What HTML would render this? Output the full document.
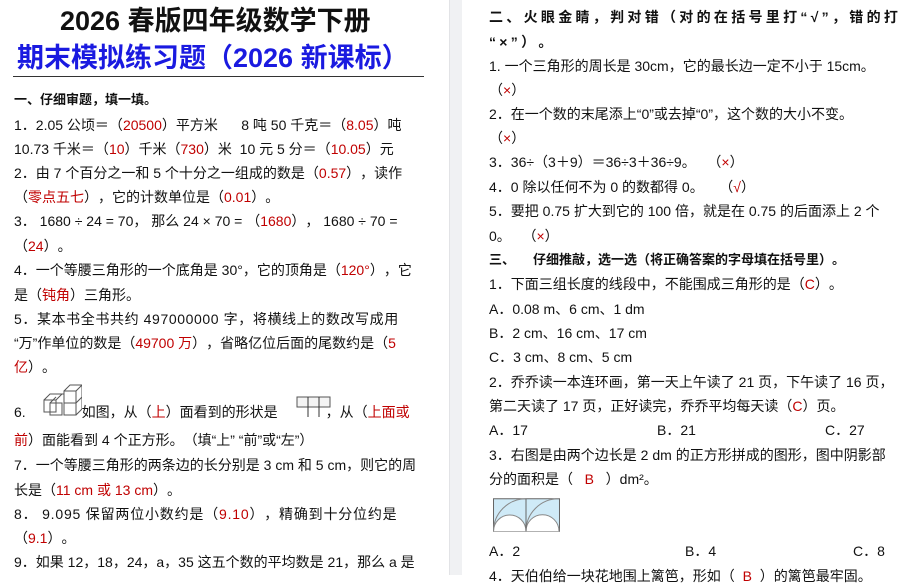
<!DOCTYPE html>
<html><head><meta charset="utf-8"><style>
body{margin:0;width:922px;height:575px;overflow:hidden;background:#fff;font-family:"Liberation Sans","Noto Sans CJK SC",sans-serif;font-size:14px;color:#111;position:relative;text-spacing-trim:space-all}
.l{position:absolute;white-space:nowrap;line-height:20px;text-spacing-trim:space-all}
.r{color:#c00000}
.b{font-weight:bold}
.sep{position:absolute;left:449px;top:0;width:12px;height:575px;background:#f0f1f3;border-left:1px solid #e2e3e6}
</style></head><body>
<div class="sep"></div>
<div class="l b" style="left:60px;top:5px;font-size:27px;line-height:32px;color:#111">2026 春版四年级数学下册</div>
<div class="l b" style="left:17px;top:41px;font-size:27px;line-height:34px;color:#1a1ae0">期末模拟练习题（2026 新课标）</div>
<div style="position:absolute;left:13px;top:76px;width:411px;height:1px;background:#333"></div>

<div class="l b" style="left:14px;top:90px;font-size:13px">一、仔细审题，填一填。</div>
<div class="l" style="left:14px;top:115px">1．2.05 公顷＝（<span class="r">20500</span>）平方米 &nbsp;&nbsp;&nbsp;&nbsp;&nbsp;8 吨 50 千克＝（<span class="r">8.05</span>）吨</div>
<div class="l" style="left:14px;top:139px">10.73 千米＝（<span class="r">10</span>）千米（<span class="r">730</span>）米 &nbsp;10 元 5 分＝（<span class="r">10.05</span>）元</div>
<div class="l" style="left:14px;top:163px">2．由 7 个百分之一和 5 个十分之一组成的数是（<span class="r">0.57</span>），读作</div>
<div class="l" style="left:14px;top:187px">（<span class="r">零点五七</span>），它的计数单位是（<span class="r">0.01</span>）。</div>
<div class="l" style="left:14px;top:211px">3． 1680 ÷ 24 = 70， 那么 24 × 70 = （<span class="r">1680</span>）， 1680 ÷ 70 =</div>
<div class="l" style="left:14px;top:236px">（<span class="r">24</span>）。</div>
<div class="l" style="left:14px;top:260px">4．一个等腰三角形的一个底角是 30°，它的顶角是（<span class="r">120°</span>），它</div>
<div class="l" style="left:14px;top:285px">是（<span class="r">钝角</span>）三角形。</div>
<div class="l" style="left:14px;top:309px;letter-spacing:0.6px">5．某本书全书共约 497000000 字，将横线上的数改写成用</div>
<div class="l" style="left:14px;top:333px">“万”作单位的数是（<span class="r">49700 万</span>），省略亿位后面的尾数约是（<span class="r">5</span></div>
<div class="l" style="left:14px;top:357px"><span class="r">亿</span>）。</div>
<svg style="position:absolute;left:42px;top:382px" width="40" height="36" viewBox="0 0 40 36" fill="none" stroke="#555" stroke-width="1">
<rect x="22" y="9" width="12" height="12"/><path d="M22 9l6-6h12l-6 6M40 3v12l-6 6"/>
<rect x="22" y="21" width="12" height="12"/><path d="M40 15v12l-6 6"/>
<rect x="2" y="18" width="12" height="12"/><path d="M2 18l6-6h14M14 18l6-6"/>
<rect x="8" y="21" width="12" height="12"/><path d="M8 21l6-6"/>
</svg>
<div class="l" style="left:14px;top:402px">6. <span style="display:inline-block;width:52px"></span>如图，从（<span class="r">上</span>）面看到的形状是<span style="display:inline-block;width:48px"></span>，从（<span class="r">上面或</span></div>
<svg style="position:absolute;left:296px;top:396px" width="36" height="22"><rect x="1" y="1" width="33" height="10" fill="#f4f4f4" stroke="#555"/><path d="M12 1v20M23 1v20" stroke="#333"/></svg>
<div class="l" style="left:14px;top:430px"><span class="r">前</span>）面能看到 4 个正方形。（填“上” “前”或“左”）</div>
<div class="l" style="left:14px;top:455px">7．一个等腰三角形的两条边的长分别是 3 cm 和 5 cm，则它的周</div>
<div class="l" style="left:14px;top:480px">长是（<span class="r">11 cm 或 13 cm</span>）。</div>
<div class="l" style="left:14px;top:504px;letter-spacing:0.8px">8． 9.095 保留两位小数约是（<span class="r">9.10</span>），精确到十分位约是</div>
<div class="l" style="left:14px;top:528px">（<span class="r">9.1</span>）。</div>
<div class="l" style="left:14px;top:552px">9．如果 12，18，24，a，35 这五个数的平均数是 21，那么 a 是</div>

<div class="l b" style="left:489px;top:7px;font-size:14px;letter-spacing:3.3px">二、火眼金睛，判对错（对的在括号里打“√”，错的打</div>
<div class="l b" style="left:489px;top:32px;font-size:14px;letter-spacing:3.3px">“×”）。</div>
<div class="l" style="left:489px;top:56px">1. 一个三角形的周长是 30cm，它的最长边一定不小于 15cm。</div>
<div class="l" style="left:489px;top:80px">（<span class="r">×</span>）</div>
<div class="l" style="left:489px;top:104px">2．在一个数的末尾添上“0”或去掉“0”，这个数的大小不变。</div>
<div class="l" style="left:489px;top:128px">（<span class="r">×</span>）</div>
<div class="l" style="left:489px;top:152px">3．36÷（3＋9）＝36÷3＋36÷9。 &nbsp;&nbsp;（<span class="r">×</span>）</div>
<div class="l" style="left:489px;top:177px">4．0 除以任何不为 0 的数都得 0。 &nbsp;&nbsp;&nbsp;（<span class="r">√</span>）</div>
<div class="l" style="left:489px;top:201px">5．要把 0.75 扩大到它的 100 倍，就是在 0.75 的后面添上 2 个</div>
<div class="l" style="left:489px;top:226px">0。 &nbsp;&nbsp;（<span class="r">×</span>）</div>
<div class="l b" style="left:489px;top:250px;font-size:13px">三、 &nbsp;&nbsp;&nbsp;&nbsp;仔细推敲，选一选（将正确答案的字母填在括号里）。</div>
<div class="l" style="left:489px;top:274px">1．下面三组长度的线段中，不能围成三角形的是（<span class="r">C</span>）。</div>
<div class="l" style="left:489px;top:299px">A．0.08 m、6 cm、1 dm</div>
<div class="l" style="left:489px;top:323px">B．2 cm、16 cm、17 cm</div>
<div class="l" style="left:489px;top:347px">C．3 cm、8 cm、5 cm</div>
<div class="l" style="left:489px;top:372px">2．乔乔读一本连环画，第一天上午读了 21 页，下午读了 16 页，</div>
<div class="l" style="left:489px;top:396px">第二天读了 17 页，正好读完，乔乔平均每天读（<span class="r">C</span>）页。</div>
<div class="l" style="left:489px;top:420px">A．17</div>
<div class="l" style="left:657px;top:420px">B．21</div>
<div class="l" style="left:825px;top:420px">C．27</div>
<div class="l" style="left:489px;top:445px">3．右图是由两个边长是 2 dm 的正方形拼成的图形，图中阴影部</div>
<div class="l" style="left:489px;top:469px">分的面积是（ &nbsp;&nbsp;<span class="r">B</span> &nbsp;&nbsp;）dm²。</div>
<svg style="position:absolute;left:493px;top:498px" width="67" height="34" viewBox="0 0 66 33">
<rect x="0.5" y="0.5" width="65" height="32" fill="#cfeaf7" stroke="#666"/>
<path d="M0.5 32.5A16 16 0 0 1 32.5 32.5A16 16 0 0 1 65 32.5" fill="#fff" stroke="#888"/>
<path d="M0.5 32.5A32 32 0 0 1 32.5 0.5M32.5 32.5A32 32 0 0 1 65 0.5" fill="none" stroke="#888"/>
<path d="M32.5 0.5v32" stroke="#666"/>
</svg>
<div class="l" style="left:489px;top:541px">A．2</div>
<div class="l" style="left:685px;top:541px">B．4</div>
<div class="l" style="left:853px;top:541px">C．8</div>
<div class="l" style="left:489px;top:566px">4．天伯伯给一块花地围上篱笆，形如（ &nbsp;<span class="r">B</span> &nbsp;）的篱笆最牢固。</div>
</body></html>
